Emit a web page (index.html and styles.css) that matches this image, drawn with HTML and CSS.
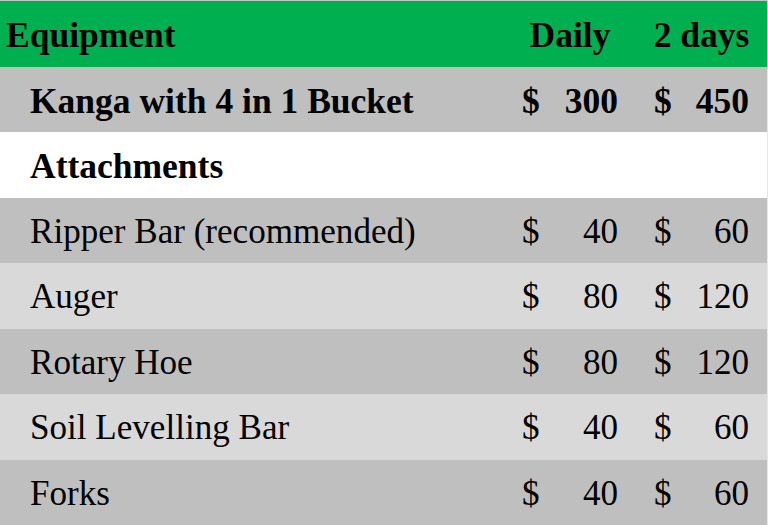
FILE: index.html
```html
<!DOCTYPE html>
<html>
<head>
<meta charset="utf-8">
<link rel="stylesheet" href="styles.css">
</head>
<body>
<div class="sheet">
  <div class="row head">
    <div class="label first">Equipment</div>
    <div class="hcell">Daily</div>
    <div class="hcell">2 days</div>
  </div>
  <div class="row dark bold">
    <div class="label">Kanga with 4 in 1 Bucket</div>
    <div class="money"><span>$</span><span>300</span></div>
    <div class="money"><span>$</span><span>450</span></div>
  </div>
  <div class="row white bold">
    <div class="label">Attachments</div>
    <div class="money"></div>
    <div class="money"></div>
  </div>
  <div class="row dark">
    <div class="label">Ripper Bar (recommended)</div>
    <div class="money"><span>$</span><span>40</span></div>
    <div class="money"><span>$</span><span>60</span></div>
  </div>
  <div class="row light">
    <div class="label">Auger</div>
    <div class="money"><span>$</span><span>80</span></div>
    <div class="money"><span>$</span><span>120</span></div>
  </div>
  <div class="row dark">
    <div class="label">Rotary Hoe</div>
    <div class="money"><span>$</span><span>80</span></div>
    <div class="money"><span>$</span><span>120</span></div>
  </div>
  <div class="row light">
    <div class="label">Soil Levelling Bar</div>
    <div class="money"><span>$</span><span>40</span></div>
    <div class="money"><span>$</span><span>60</span></div>
  </div>
  <div class="row dark">
    <div class="label">Forks</div>
    <div class="money"><span>$</span><span>40</span></div>
    <div class="money"><span>$</span><span>60</span></div>
  </div>
</div>
</body>
</html>
```
FILE: styles.css
```css
html, body {
  margin: 0;
  padding: 0;
  background: #ffffff;
}
.sheet {
  width: 767px;
  height: 524px;
  border-top: 1px solid #c6c6c6;
  border-right: 1px solid #e6e6e6;
  display: grid;
  grid-template-rows: repeat(8, 1fr);
  font-family: "Liberation Serif", "Times New Roman", serif;
  font-size: 35.1px;
  color: #000;
}
.row {
  display: grid;
  grid-template-columns: 1fr 132px 131px;
  align-items: center;
  padding-top: 3px;
}
.head {
  background: #00b050;
  font-weight: bold;
  font-size: 35.5px;
}
.dark { background: #bfbfbf; }
.light { background: #d9d9d9; }
.white { background: #ffffff; }
.bold {
  font-weight: bold;
  font-size: 35.5px;
}
.label {
  padding-left: 30px;
  white-space: nowrap;
}
.label.first {
  padding-left: 6px;
}
.hcell {
  text-align: center;
}
.money {
  display: flex;
  justify-content: space-between;
  padding: 0 18px;
}
```
